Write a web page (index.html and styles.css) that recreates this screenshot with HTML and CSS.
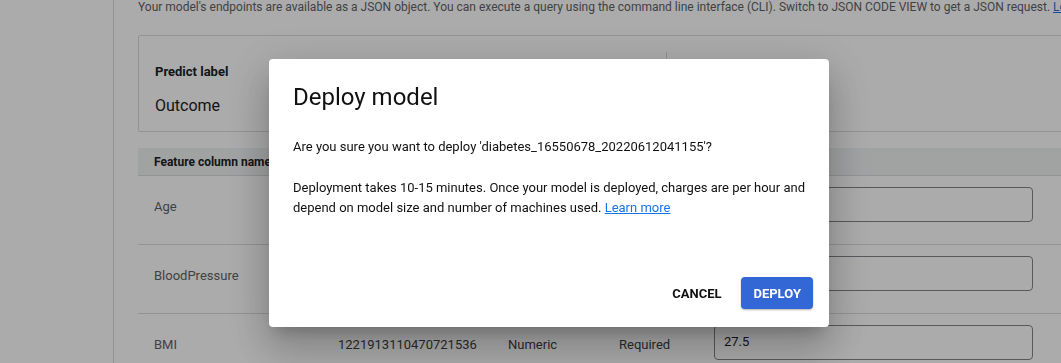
FILE: index.html
```html
<!DOCTYPE html>
<html lang="en">
<head>
    <meta charset="UTF-8">
    <meta name="viewport" content="width=device-width, initial-scale=1.0">
    <title>Deploy model</title>
    <link rel="stylesheet" href="styles.css">
</head>
<body>
    <div class="page">
        <div class="sidebar"></div>
        <div class="main">
            <div class="content">
                <p class="intro">Your model's endpoints are available as a JSON object. You can execute a query using the command line interface (CLI). Switch to JSON CODE VIEW to get a JSON request. <a href="#">Learn more</a></p>

                <div class="predict-card">
                    <div class="predict-left">
                        <div class="predict-title">Predict label</div>
                        <div class="predict-value">Outcome</div>
                    </div>
                    <div class="predict-right"></div>
                </div>

                <div class="feature-table">
                    <div class="feature-row feature-head">
                        <div class="cell">Feature column name</div>
                        <div class="cell"></div>
                        <div class="cell"></div>
                        <div class="cell"></div>
                        <div class="cell"></div>
                    </div>
                    <div class="feature-row">
                        <div class="cell name">Age</div>
                        <div class="cell val"></div>
                        <div class="cell val"></div>
                        <div class="cell val"></div>
                        <div class="cell"><div class="field"></div></div>
                    </div>
                    <div class="feature-row">
                        <div class="cell name">BloodPressure</div>
                        <div class="cell val"></div>
                        <div class="cell val"></div>
                        <div class="cell val"></div>
                        <div class="cell"><div class="field"></div></div>
                    </div>
                    <div class="feature-row">
                        <div class="cell name">BMI</div>
                        <div class="cell val">1221913110470721536</div>
                        <div class="cell val">Numeric</div>
                        <div class="cell val">Required</div>
                        <div class="cell"><div class="field">27.5</div></div>
                    </div>
                </div>
            </div>
        </div>
    </div>

    <div class="overlay">
        <div class="dialog">
            <h2 class="dialog-title">Deploy model</h2>
            <p class="dialog-text">Are you sure you want to deploy 'diabetes_16550678_20220612041155'?</p>
            <p class="dialog-text second">Deployment takes 10-15 minutes. Once your model is deployed, charges are per hour and depend on model size and number of machines used. <a href="#">Learn more</a></p>
            <div class="dialog-actions">
                <button class="btn btn-text">CANCEL</button>
                <button class="btn btn-primary">DEPLOY</button>
            </div>
        </div>
    </div>
</body>
</html>
```

FILE: styles.css
```css
body {
    margin: 0;
    font-family: Roboto, "Liberation Sans", Arial, sans-serif;
    background-color: #fff;
    color: #202124;
}
.page {
    display: flex;
    height: 363px;
    overflow: hidden;
}
.sidebar {
    width: 113px;
    flex-shrink: 0;
    border-right: 1px solid #dadce0;
}
.main {
    flex: 1;
    overflow: hidden;
    padding-left: 24px;
}
.content {
    width: 1000px;
}
.intro {
    margin: -2px 0 0 0;
    font-size: 12px;
    line-height: 18px;
    color: #5f6368;
    white-space: nowrap;
}
.intro a {
    color: #1a73e8;
}

/* predict label card */
.predict-card {
    display: flex;
    margin-top: 19px;
    height: 95px;
    border: 1px solid #dadce0;
    border-radius: 2px;
}
.predict-left {
    width: 495px;
    padding: 27px 16px 0 16px;
}
.predict-title {
    font-size: 13px;
    font-weight: 700;
    line-height: 18px;
    color: #202124;
}
.predict-value {
    margin-top: 14px;
    font-size: 16px;
    line-height: 22px;
    color: #202124;
}
.predict-right {
    flex: 1;
    margin: 16px 0;
    border-left: 1px solid #dadce0;
}

/* feature table */
.feature-table {
    margin-top: 16px;
}
.feature-row {
    display: grid;
    grid-template-columns: 184px 170px 111px 95px 1fr;
    height: 69px;
    padding-top: 11px;
    box-sizing: border-box;
    border-bottom: 1px solid #dadce0;
    font-size: 13px;
}
.feature-head {
    height: 28px;
    padding-top: 0;
    background-color: #f1f3f4;
    border-bottom: 1px solid #dadce0;
    font-size: 12px;
    font-weight: 700;
    color: #202124;
    align-items: center;
}
.cell {
    padding-left: 16px;
    white-space: nowrap;
}
.feature-row .name,
.feature-row .val {
    line-height: 34px;
    padding-top: 3px;
}
.name {
    color: #5f6368;
}
.val {
    color: #3c4043;
}
.field {
    width: 319px;
    height: 35px;
    box-sizing: border-box;
    border: 1px solid #80868b;
    border-radius: 4px;
    padding-left: 9px;
    line-height: 31px;
    font-size: 13px;
    color: #202124;
}

/* dialog */
.overlay {
    position: fixed;
    top: 0;
    left: 0;
    right: 0;
    bottom: 0;
    background-color: rgba(0, 0, 0, 0.33);
    display: flex;
    align-items: flex-start;
    padding: 59px 0 0 269px;
}
.dialog {
    width: 560px;
    height: 268px;
    box-sizing: border-box;
    background-color: #fff;
    border-radius: 4px;
    display: flex;
    flex-direction: column;
    box-shadow: 0 11px 15px -7px rgba(0, 0, 0, 0.2), 0 24px 38px 3px rgba(0, 0, 0, 0.14), 0 9px 46px 8px rgba(0, 0, 0, 0.12);
}
.dialog-title {
    margin: 22px 24px 0 24px;
    font-size: 24px;
    font-weight: 400;
    line-height: 32px;
    color: #111;
}
.dialog-text {
    margin: 24px 24px 0 24px;
    font-size: 13px;
    line-height: 20px;
    color: #111;
}
.dialog-text.second {
    margin-top: 21px;
}
.dialog-text a {
    color: #1a73e8;
}
.dialog-actions {
    margin-top: auto;
    display: flex;
    justify-content: flex-end;
    gap: 8px;
    padding: 0 16px 18px 0;
}
.btn {
    height: 32px;
    padding: 0 12px;
    border: none;
    border-radius: 4px;
    font-family: Roboto, "Liberation Sans", Arial, sans-serif;
    font-size: 13px;
    font-weight: 700;
    cursor: pointer;
}
.btn-text {
    background: none;
    color: #111;
}
.btn-primary {
    background-color: #3367d6;
    color: #fff;
    box-shadow: 0 1px 2px rgba(0, 0, 0, 0.3);
}
```
